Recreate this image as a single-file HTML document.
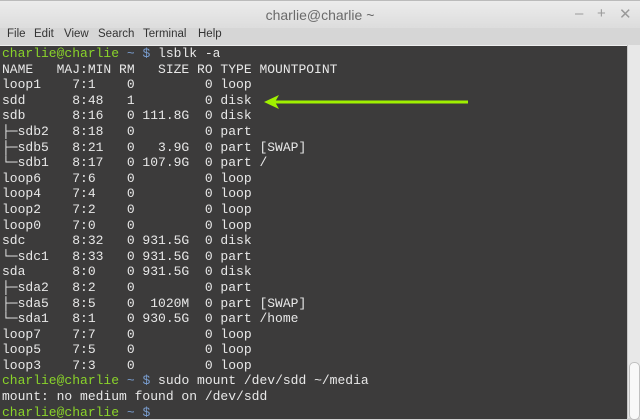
<!DOCTYPE html>
<html><head><style>
body{margin:0;width:640px;height:418px;overflow:hidden;background:#d6d6d6;font-family:"Liberation Sans",sans-serif;position:relative}
.title{position:absolute;left:0;top:0;width:640px;height:28px;background:linear-gradient(#ececec,#dcdcdc);border-top:1px solid #bbb}
.title .t{position:absolute;left:0;right:0;top:6px;text-align:center;font-size:14px;color:#6a6a6a}
.ctl{position:absolute;top:4px;font-size:15px;color:#9a9a9a}
.menu{position:absolute;left:0;top:28px;width:640px;height:17px;background:#d6d6d6;font-size:11.5px;color:#333}
.menu span{position:absolute;top:0}
.term{position:absolute;left:0;top:45px;width:627px;height:373px;background:#3c3b3b;border-top:1px solid #eee}
.sb{position:absolute;left:627px;top:45px;width:13px;height:373px;background:#e8e8e8;border-left:1px solid #c8c8c8}
.thumb{position:absolute;left:629px;top:362px;width:9px;height:56px;background:#f8f8f8;border:1px solid #c0c0c0;border-radius:5px}
pre{margin:0;position:absolute;left:2px;top:0px;font-family:"Liberation Mono","DejaVu Sans Mono",monospace;font-size:13px;line-height:15.6px;color:#e8e8e8}
.g{color:#8ad42a}.b{color:#7a9ed0}
</style></head><body>
<div class="title"><div class="t">charlie@charlie ~</div>
<span class="ctl" style="left:575px">–</span><span class="ctl" style="left:597px">+</span><span class="ctl" style="left:619px">✕</span></div>
<div class="menu"><span style="left:7px">File</span><span style="left:34px">Edit</span><span style="left:64px">View</span><span style="left:98px">Search</span><span style="left:143px">Terminal</span><span style="left:198px">Help</span></div>
<div class="term"><pre><span class="g">charlie@charlie</span> <span class="b">~ $</span> lsblk -a
NAME   MAJ:MIN RM   SIZE RO TYPE MOUNTPOINT
loop1    7:1    0         0 loop 
sdd      8:48   1         0 disk 
sdb      8:16   0 111.8G  0 disk 
├─sdb2   8:18   0         0 part 
├─sdb5   8:21   0   3.9G  0 part [SWAP]
└─sdb1   8:17   0 107.9G  0 part /
loop6    7:6    0         0 loop 
loop4    7:4    0         0 loop 
loop2    7:2    0         0 loop 
loop0    7:0    0         0 loop 
sdc      8:32   0 931.5G  0 disk 
└─sdc1   8:33   0 931.5G  0 part 
sda      8:0    0 931.5G  0 disk 
├─sda2   8:2    0         0 part 
├─sda5   8:5    0  1020M  0 part [SWAP]
└─sda1   8:1    0 930.5G  0 part /home
loop7    7:7    0         0 loop 
loop5    7:5    0         0 loop 
loop3    7:3    0         0 loop 
<span class="g">charlie@charlie</span> <span class="b">~ $</span> sudo mount /dev/sdd ~/media
mount: no medium found on /dev/sdd
<span class="g">charlie@charlie</span> <span class="b">~ $</span> </pre>
<svg style="position:absolute;left:0;top:0" width="627" height="373"><line x1="272" y1="56" x2="468" y2="56" stroke="#a0f000" stroke-width="3"/><polygon points="264,56 279,49 275,56 279,63" fill="#a0f000"/></svg>
</div>
<div class="sb"></div><div class="thumb"></div>
</body></html>
